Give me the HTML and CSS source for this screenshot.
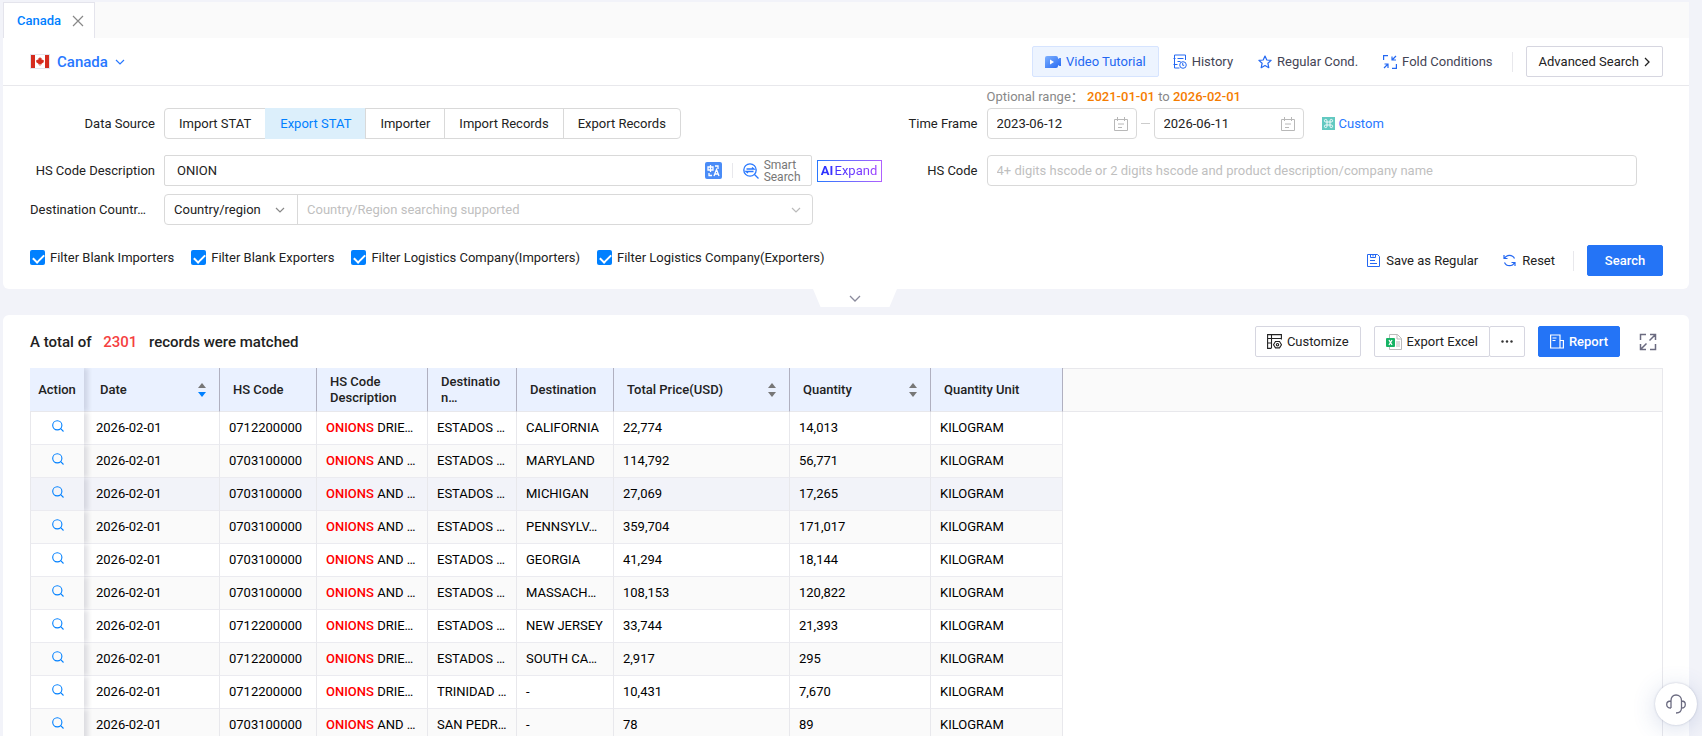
FILE: index.html
```html
<!DOCTYPE html>
<html lang="en">
<head>
    <meta charset="UTF-8">
    <meta name="viewport" content="width=device-width, initial-scale=1">
    <title>Canada</title>
    <link rel="stylesheet" href="styles.css">
</head>
<body>
    <nav class="tabs">
        <div class="tab">
            <a href="#">Canada</a>
            <button class="tab-close" aria-label="Close tab">
                <svg width="12" height="12" viewBox="0 0 12 12"><path d="M1 1l10 10M11 1L1 11" fill="none" stroke="#888" stroke-width="1.2"/></svg>
            </button>
        </div>
    </nav>

    <section class="card search-card">
        <header class="toolbar">
            <button class="country">
                <svg width="20" height="15" viewBox="0 0 20 15">
                    <rect width="20" height="15" fill="#e4e4ec"/>
                    <rect x="1" y="1" width="18" height="13" fill="#fff"/>
                    <path d="M1 1h4v13H1zM15 1h4v13h-4z" fill="#d52b1e"/>
                    <path d="M10 3l1 1.6.9-.4-.3 1.9 1-.7.3.8h1.2l-.5 1.2.4.6-2.5 1.7.2.8-1.4-.2V12h-.6v-1.700l-1.400.2.2-.8L6 8l.4-.6L5.900 6.200h1.200l.3-.8 1 .7-.3-1.900.9.4z" fill="#d52b1e"/>
                </svg>
                <span>Canada</span>
                <svg width="10" height="6" viewBox="0 0 10 6"><path d="M1 1l4 4 4-4" fill="none" stroke="#2878ff" stroke-width="1.2"/></svg>
            </button>
            <div class="tools">
                <button class="tool video">
                    <svg width="16" height="14" viewBox="0 0 16 14">
                        <defs><linearGradient id="cam" x1="0" y1="0" x2="1" y2="1"><stop offset="0" stop-color="#7db0ff"/><stop offset="1" stop-color="#2468f2"/></linearGradient></defs>
                        <path d="M2 1h9a2 2 0 0 1 2 2v1l1.500-1H16v8h-1.500L13 10v1a2 2 0 0 1-2 2H0V3a2 2 0 0 1 2-2z" fill="url(#cam)"/>
                        <path d="M5 4.500v5L9 7z" fill="#fff"/>
                    </svg>
                    Video Tutorial
                </button>
                <button class="tool">
                    <svg width="14" height="15" viewBox="0 0 14 15" fill="none" stroke="#2468f2">
                        <path d="M12.500 6V1h-11v13h5M.5 4.500h2M4.500 4.500h6M4.500 7.500h3M.5 10.500h4"/>
                        <circle cx="10" cy="11" r="3.300"/><path d="M9.700 9v2.300h1.500"/>
                    </svg>
                    History
                </button>
                <button class="tool star">
                    <svg width="14" height="14" viewBox="0 0 14 14"><path d="M7 1l1.800 4 4.300.4L9.900 8.300l.9 4.400L7 10.500l-3.800 2.200.9-4.400L.9 5.400l4.300-.4z" fill="none" stroke="#2468f2" stroke-width="1.200" stroke-linejoin="round"/></svg>
                    Regular Cond.
                </button>
                <button class="tool">
                    <svg width="14" height="14" viewBox="0 0 14 14" fill="none" stroke="#2468f2" stroke-width="1.200">
                        <path d="M.6 5V.6H5"/><path d="M13.400 9v4.400H9"/>
                        <path d="M13 1L9 5M9 1.500V5h4M1 13l4-4M1.500 9H5v4"/>
                    </svg>
                    Fold Conditions
                </button>
                <span class="divider"></span>
                <button class="btn advanced">
                    Advanced Search
                    <svg width="6" height="10" viewBox="0 0 6 10"><path d="M1 1l4 4-4 4" fill="none" stroke="#222" stroke-width="1.300"/></svg>
                </button>
            </div>
        </header>

        <form class="conditions">
            <div class="field left">
                <span class="label">Data Source</span>
                <div class="segments">
                    <button type="button">Import STAT</button>
                    <button type="button" class="active">Export STAT</button>
                    <button type="button">Importer</button>
                    <button type="button">Import Records</button>
                    <button type="button">Export Records</button>
                </div>
            </div>
            <div class="field right time">
                <label class="label" for="from">Time Frame</label>
                <div>
                    <p class="range">Optional range： <b>2021-01-01</b> to <b>2026-02-01</b></p>
                    <div class="dates">
                        <div class="box date">
                            <input id="from" type="text" value="2023-06-12">
                            <svg width="14" height="14" viewBox="0 0 14 14" fill="none" stroke="#b8b8b8"><path d="M.5 2.500h13v11H.5zM3.500 0v4M10.500 0v4M4 7h6M4 10.500h4"/></svg>
                        </div>
                        <span class="dash"></span>
                        <div class="box date">
                            <input type="text" value="2026-06-11" aria-label="End date">
                            <svg width="14" height="14" viewBox="0 0 14 14" fill="none" stroke="#b8b8b8"><path d="M.5 2.500h13v11H.5zM3.500 0v4M10.500 0v4M4 7h6M4 10.500h4"/></svg>
                        </div>
                        <a class="custom" href="#">
                            <svg width="13" height="13" viewBox="0 0 13 13"><rect width="13" height="13" fill="#62c9c1"/><path d="M5 5V3.700A1.300 1.300 0 1 0 3.700 5h5.600A1.300 1.300 0 1 0 8 3.700v5.600A1.300 1.300 0 1 0 9.300 8H3.700A1.300 1.300 0 1 0 5 9.300z" fill="none" stroke="#fff" stroke-width=".9"/></svg>
                            Custom
                        </a>
                    </div>
                </div>
            </div>

            <div class="field left">
                <label class="label" for="desc">HS Code Description</label>
                <div class="box desc">
                    <input id="desc" type="text" value="ONION">
                    <button type="button" class="icon-btn" aria-label="Translate">
                        <svg width="17" height="17" viewBox="0 0 17 17">
                            <rect width="17" height="17" rx="2" fill="#4a8cf7"/>
                            <path d="M3 5h5v3H3zM5.500 3v7M10 4h3v3M4 11v2.500h3M9 14l2.500-6.500L14 14M10 12h3" fill="none" stroke="#fff" stroke-width="1.300"/>
                        </svg>
                    </button>
                    <span class="mini-divider"></span>
                    <button type="button" class="smart">
                        <svg width="16" height="16" viewBox="0 0 16 16" fill="none" stroke="#2878ff" stroke-width="1.300">
                            <circle cx="7" cy="7" r="6.200"/><path d="M11.500 11.500l4 4M3.500 6h7.500L9 4.500M10.500 8.500H3l2 1.500"/>
                        </svg>
                        <span>Smart<br>Search</span>
                    </button>
                </div>
                <button type="button" class="ai"><span><b>AI</b> Expand</span></button>
            </div>
            <div class="field right">
                <label class="label" for="code">HS Code</label>
                <div class="box code">
                    <input id="code" type="text" placeholder="4+ digits hscode or 2 digits hscode and product description/company name">
                </div>
            </div>

            <div class="field left destination">
                <label class="label" for="dest">Destination Countr…</label>
                <div class="box dest">
                    <div class="select-wrap">
                        <select aria-label="Destination type"><option>Country/region</option></select>
                        <svg width="10" height="6" viewBox="0 0 10 6"><path d="M1 1l4 4 4-4" fill="none" stroke="#888" stroke-width="1.200"/></svg>
                    </div>
                    <input id="dest" type="text" placeholder="Country/Region searching supported">
                    <svg width="10" height="6" viewBox="0 0 10 6"><path d="M1 1l4 4 4-4" fill="none" stroke="#bbb" stroke-width="1.200"/></svg>
                </div>
            </div>

            <div class="actions">
                <div class="filters">
                    <label><input type="checkbox" checked>Filter Blank Importers</label>
                    <label><input type="checkbox" checked>Filter Blank Exporters</label>
                    <label><input type="checkbox" checked>Filter Logistics Company(Importers)</label>
                    <label><input type="checkbox" checked>Filter Logistics Company(Exporters)</label>
                </div>
                <div class="submit">
                    <button type="button" class="tool">
                        <svg width="13" height="13" viewBox="0 0 13 13" fill="none" stroke="#2468f2"><path d="M.5.500h10l2 2v10H.5zM3.500.500v3h5v-3M6 1v1.500M3 6.500h5M3 9.500h7"/></svg>
                        Save as Regular
                    </button>
                    <button type="button" class="tool reset">
                        <svg width="13" height="13" viewBox="0 0 13 13" fill="none" stroke="#2468f2" stroke-width="1.200"><path d="M1 1v3.500h3.500M1.500 4.500a5.500 5.500 0 0 1 10 0M12 12V8.500H8.500M11.500 8.500a5.500 5.500 0 0 1-10 0"/></svg>
                        Reset
                    </button>
                    <span class="divider"></span>
                    <button type="button" class="btn primary search">Search</button>
                </div>
            </div>
        </form>
    </section>

    <div class="fold-row">
        <button class="fold" aria-label="Fold">
            <svg width="12" height="7" viewBox="0 0 12 7"><path d="M1 1l5 5 5-5" fill="none" stroke="#8a8a9c" stroke-width="1.300"/></svg>
        </button>
    </div>

    <main class="card results">
        <header class="results-head">
            <h1>A total of <span>2301</span> records were matched</h1>
            <div class="results-tools">
                <button class="btn customize">
                    <svg width="15" height="15" viewBox="0 0 15 15" fill="none" stroke="#222" stroke-width="1.100">
                        <path d="M14.400 5.500V.6H.6v13.800h3.900M.6 4.500h13.800M4.500 1v13M.6 9h4"/>
                        <path d="M8.500 7.500h4l2 3.200-2 3.200h-4l-2-3.200z"/><circle cx="10.500" cy="10.700" r="1.200"/>
                    </svg>
                    Customize
                </button>
                <div class="export">
                    <button class="btn">
                        <svg width="16" height="16" viewBox="0 0 16 16">
                            <path d="M3.500.500h8l4 4v11h-12zM11 .500v4.500h4.500" fill="#fff" stroke="#bbb"/>
                            <path d="M10 8h4M10 10h4M10 12h4" stroke="#bbb"/>
                            <rect y="4" width="9" height="9" rx="1" fill="#16b364"/><path d="M3 6l3 5M6 6l-3 5" stroke="#fff" stroke-width="1.300"/>
                        </svg>
                        Export Excel
                    </button>
                    <button class="btn more" aria-label="More">
                        <svg width="12" height="3" viewBox="0 0 12 3" fill="#333"><circle cx="1.500" cy="1.500" r="1.200"/><circle cx="6" cy="1.500" r="1.200"/><circle cx="10.500" cy="1.500" r="1.200"/></svg>
                    </button>
                </div>
                <button class="btn primary report">
                    <svg width="14" height="15" viewBox="0 0 14 15" fill="none" stroke="#fff" stroke-width="1.200"><path d="M10 14H.6V1H10zM10 14h3.400V6.500H10M2.500 4h4M2.500 6.500h3"/></svg>
                    Report
                </button>
                <button class="icon-btn" aria-label="Full screen">
                    <svg width="18" height="18" viewBox="0 0 18 18" fill="none" stroke="#6b6b80" stroke-width="1.500"><path d="M1.500 7V1.500H7M16.500 11v5.500H11M11 1.500h5.500V7M16 2l-5.500 5.500M7 16.500H1.500V11M2 16l5.500-5.500"/></svg>
                </button>
            </div>
        </header>

        <div class="table-wrap">
            <table>
                <colgroup>
                    <col class="c-action"><col class="c-date"><col class="c-code"><col class="c-desc"><col class="c-country"><col class="c-dest"><col class="c-price"><col class="c-qty"><col class="c-unit"><col>
                </colgroup>
                <thead>
                    <tr>
                        <th class="action">Action</th>
                        <th><div class="sortable">Date <span class="sort desc-on"></span></div></th>
                        <th>HS Code</th>
                        <th>HS Code<br>Description</th>
                        <th>Destinatio<br>n…</th>
                        <th>Destination</th>
                        <th><div class="sortable">Total Price(USD) <span class="sort"></span></div></th>
                        <th><div class="sortable">Quantity <span class="sort"></span></div></th>
                        <th>Quantity Unit</th>
                        <th class="filler"></th>
                    </tr>
                </thead>
                <tbody id="rows"></tbody>
            </table>
        </div>
    </main>

    <button class="support" aria-label="Support">
        <svg width="20" height="20" viewBox="0 0 20 20" fill="none" stroke="#6b6b80" stroke-width="1.300">
            <path d="M5 14V6.500C5 3 7 1 10 1s5.500 2 5.500 5.500V14c0 3-2 5-5.500 5M5 7C2.500 7 .7 8.500.7 10.500S2.500 14 5 14M15.500 7c2.300 0 3.800 1.500 3.800 3.500S17.800 14 15.500 14"/>
        </svg>
    </button>

    <script src="script.js"></script>
</body>
</html>
```
FILE: styles.css
```css
* {
    box-sizing: border-box;
}

body {
    display: flex;
    flex-direction: column;
    height: 100vh;
    margin: 0;
    padding: 2px 13px 0 3px;
    overflow: hidden;
    background: #f2f3f9;
    color: #222;
    font-family: Roboto, "Noto Sans CJK SC", sans-serif;
    font-size: 13px;
    line-height: 16px;
}

button,
input,
select {
    padding: 0;
    border: 0;
    background: none;
    color: inherit;
    font: inherit;
}

svg {
    flex: none;
}

a {
    color: #2878ff;
    text-decoration: none;
}

/* tabs */
.tabs {
    flex: none;
    display: flex;
    height: 36px;
    background: #fafafa;
}

.tab {
    display: flex;
    align-items: center;
    gap: 11px;
    padding: 0 10px 0 13px;
    border: 1px solid #e4e4ec;
    border-bottom: 0;
    background: #fff;
}

.tab a {
    color: #0080ff;
    font-weight: 500;
}

.tab-close {
    display: flex;
}

.card {
    flex: none;
    background: #fff;
}

/* search card */
.search-card {
    border-radius: 0 0 6px 6px;
}

.toolbar {
    display: flex;
    align-items: center;
    justify-content: space-between;
    height: 48px;
    padding: 0 26px 0 27px;
    border-bottom: 1px solid #e8e8ec;
}

.country {
    display: flex;
    align-items: center;
    gap: 7px;
    color: #2878ff;
    font-size: 15px;
    font-weight: 500;
}

.tools,
.submit {
    display: flex;
    align-items: center;
}

.tool {
    display: flex;
    align-items: center;
    gap: 5px;
    margin-right: 25px;
    color: #444455;
}

.video {
    height: 31px;
    margin-right: 14px;
    padding: 0 12px;
    border: 1px solid #d6e4ff;
    border-radius: 2px;
    background: #edf4ff;
    color: #2468f2;
}

.divider {
    width: 1px;
    height: 20px;
    margin-right: 13px;
    background: #e8e8ec;
}

.tools .divider {
    margin-left: -6px;
}

.btn {
    display: flex;
    align-items: center;
    justify-content: center;
    gap: 5px;
    height: 31px;
    padding: 0 11px;
    border: 1px solid #d6d6e0;
    border-radius: 2px;
    background: #fff;
}

.advanced {
    padding: 0 12px;
}

.primary {
    border-color: #2474f6;
    background: #2474f6;
    color: #fff;
    font-weight: 500;
}

/* form */
.conditions {
    display: grid;
    grid-template-columns: calc(50% + 35px) minmax(0, 1fr);
    padding: 3px 26px 13px 27px;
}

.field {
    display: flex;
    align-items: center;
    gap: 9px;
    height: 31px;
    margin-bottom: 8px;
}

.field.left {
    padding-right: 69px;
}

.field.right {
    padding-right: 26px;
}

.field:nth-child(-n+2) {
    height: 50px;
    margin-bottom: 16px;
    align-items: flex-end;
}

.label {
    flex: none;
    width: 125px;
    text-align: right;
    white-space: nowrap;
}

.right .label {
    width: 96px;
}

.destination .label {
    text-align: left;
}

.field:nth-child(-n+2) .label {
    line-height: 31px;
}

.segments {
    display: flex;
}

.segments button {
    height: 31px;
    margin-right: -1px;
    padding: 0 14px;
    border: 1px solid #d9d9d9;
}

.segments button:first-child {
    border-radius: 4px 0 0 4px;
}

.segments button:last-child {
    border-radius: 0 4px 4px 0;
}

.segments .active {
    border-color: #dceffb;
    background: #dceffb;
    color: #0080ff;
}

.box {
    flex: 1;
    display: flex;
    align-items: center;
    min-width: 0;
    height: 31px;
    border: 1px solid #d9d9d9;
    border-radius: 4px;
}

.box input {
    flex: 1;
    min-width: 0;
    height: 29px;
    padding: 0 0 0 9px;
    outline: 0;
}

.box input::placeholder {
    color: #bfbfbf;
}

.range {
    margin: 0 0 3px;
    color: #888;
}

.range b {
    color: #f57c00;
    font-weight: 500;
}

.dates {
    display: flex;
    align-items: center;
}

.date {
    flex: none;
    width: 150px;
    padding-right: 8px;
}

.dash {
    width: 9px;
    height: 1px;
    margin: 0 4px;
    background: #ccc;
}

.custom {
    display: flex;
    align-items: center;
    gap: 4px;
    margin-left: 18px;
}

.desc {
    padding-right: 10px;
    border-radius: 2px;
}

.desc input {
    padding-left: 12px;
}

.icon-btn {
    display: flex;
}

.mini-divider {
    width: 1px;
    height: 15px;
    margin: 0 10px;
    background: #e8e8ec;
}

.smart {
    display: flex;
    align-items: center;
    gap: 5px;
    color: #777;
    font-size: 12px;
    line-height: 12px;
    text-align: left;
}

.ai {
    flex: none;
    width: 65px;
    height: 22px;
    margin: 0 -69px 0 -4px;
    border: 1px solid;
    border-image: linear-gradient(90deg, #2878ff, #b060ff) 1;
}

.ai span {
    background: linear-gradient(90deg, #2430ff, #9a3cff);
    background-clip: text;
    -webkit-background-clip: text;
    color: transparent;
}

.ai b {
    margin-right: -2px;
}

.select-wrap {
    display: flex;
    align-items: center;
    height: 29px;
    padding: 0 12px 0 9px;
    border-right: 1px solid #d9d9d9;
    gap: 14px;
}

.select-wrap select {
    appearance: none;
    outline: 0;
}

.dest {
    padding-right: 11px;
}

.actions {
    grid-column: 1 / -1;
    display: flex;
    justify-content: space-between;
    margin-top: 12px;
}

.filters {
    display: flex;
    gap: 17px;
    height: 25px;
    align-items: center;
}

.filters label {
    display: flex;
    align-items: center;
    gap: 5px;
}

.filters input {
    appearance: none;
    width: 15px;
    height: 15px;
    margin: 0;
    border-radius: 2px;
    background: #0080ff;
    position: relative;
}

.filters input:checked::after {
    content: "";
    position: absolute;
    top: 2px;
    left: 5px;
    width: 5px;
    height: 9px;
    border: solid #fff;
    border-width: 0 2px 2px 0;
    transform: rotate(45deg);
}

.submit .tool {
    gap: 6px;
    color: #222;
}

.submit .reset {
    margin-right: 18px;
}

.search {
    width: 76px;
}

/* fold handle */
.fold-row {
    flex: none;
    display: flex;
    justify-content: center;
    height: 26px;
    padding-left: 18px;
}

.fold {
    display: flex;
    align-items: center;
    justify-content: center;
    width: 84px;
    height: 18px;
    background: #fff;
    clip-path: polygon(0 0, 100% 0, 91% 100%, 9% 100%);
}

/* results */
.results {
    flex: 1;
    min-height: 0;
    padding: 0 26px 0 27px;
    border-radius: 6px 6px 0 0;
    overflow: hidden;
}

.results-head {
    display: flex;
    align-items: center;
    justify-content: space-between;
    height: 53px;
}

.results h1 {
    margin: 0;
    font-size: 15px;
    font-weight: 500;
}

.results h1 span {
    margin: 0 8px;
    color: #f53f3f;
}

.results-tools {
    display: flex;
    align-items: center;
    gap: 13px;
}

.results-tools .icon-btn {
    margin: 0 6px;
}

.export {
    display: flex;
}

.export .more {
    width: 36px;
    margin-left: -1px;
}

.table-wrap {
    border-right: 1px solid #e8e8ec;
    height: 100%;
}

table {
    width: 100%;
    table-layout: fixed;
    border-collapse: separate;
    border-spacing: 0;
    color: #000;
}

.c-action { width: 54px; }
.c-date { width: 136px; }
.c-code { width: 97px; }
.c-desc { width: 111px; }
.c-country { width: 89px; }
.c-dest { width: 97px; }
.c-price { width: 176px; }
.c-qty { width: 141px; }
.c-unit { width: 132px; }

th {
    height: 44px;
    padding: 0 13px;
    border-right: 1px solid #b0b0c0;
    border-bottom: 1px solid #e8e8ec;
    background: #eaf1ff;
    color: #222;
    font-weight: 500;
    text-align: left;
}

td {
    height: 33px;
    padding: 0 0 0 9px;
    border-right: 1px solid #e8e8ec;
    border-bottom: 1px solid #ebebf0;
    white-space: nowrap;
    overflow: hidden;
}

tr > .action {
    position: relative;
    padding: 0;
    border-right: 0;
    text-align: center;
    overflow: visible;
    box-shadow: 4px 0 5px rgba(0, 0, 40, 0.12);
    clip-path: inset(0 -8px 0 0);
}

td.action {
    border-left: 1px solid #e8e8ec;
    background: inherit;
}

td.action button {
    vertical-align: middle;
}

.action + th {
    padding-left: 16px;
}

.action + td {
    padding-left: 12px;
}

tbody tr {
    background: #fff;
}

tbody tr:nth-child(even) td:not(.filler) {
    background: #fafafa;
}

tbody tr:nth-child(3) td:not(.filler) {
    background: #f2f3f9;
}

th.filler {
    border: 1px solid #e8e8ec;
    border-width: 1px 0;
    background: #fafafa;
}

td.filler {
    border: 0;
    background: #fff;
}

td b {
    color: #ff0000;
    font-weight: 500;
}

.sortable {
    display: flex;
    align-items: center;
    justify-content: space-between;
}

.sort::before,
.sort::after {
    content: "";
    display: block;
    border: 4px solid transparent;
}

.sort::before {
    margin-bottom: 4px;
    border-top: 0;
    border-bottom: 5px solid #777;
}

.sort::after {
    border-bottom: 0;
    border-top: 5px solid #777;
}

.desc-on::after {
    border-top-color: #0080ff;
}

.support {
    position: fixed;
    right: 5px;
    bottom: 11px;
    display: flex;
    align-items: center;
    justify-content: center;
    width: 42px;
    height: 42px;
    border-radius: 50%;
    background: #fff;
    box-shadow: 0 0 2px rgba(60, 70, 110, 0.3), 0 4px 24px rgba(60, 90, 160, 0.2);
}
```
FILE: script.js
```js
const records = [
    ['0712200000', 'DRIE…', 'ESTADOS …', 'CALIFORNIA', '22,774', '14,013'],
    ['0703100000', 'AND …', 'ESTADOS …', 'MARYLAND', '114,792', '56,771'],
    ['0703100000', 'AND …', 'ESTADOS …', 'MICHIGAN', '27,069', '17,265'],
    ['0703100000', 'AND …', 'ESTADOS …', 'PENNSYLV…', '359,704', '171,017'],
    ['0703100000', 'AND …', 'ESTADOS …', 'GEORGIA', '41,294', '18,144'],
    ['0703100000', 'AND …', 'ESTADOS …', 'MASSACH…', '108,153', '120,822'],
    ['0712200000', 'DRIE…', 'ESTADOS …', 'NEW JERSEY', '33,744', '21,393'],
    ['0712200000', 'DRIE…', 'ESTADOS …', 'SOUTH CA…', '2,917', '295'],
    ['0712200000', 'DRIE…', 'TRINIDAD …', '-', '10,431', '7,670'],
    ['0703100000', 'AND …', 'SAN PEDR…', '-', '78', '89']
];

document.getElementById('rows').innerHTML = records.map(r => `
    <tr>
        <td class="action"><button aria-label="View"><svg width="12" height="12" viewBox="0 0 12 12" fill="none" stroke="#0080ff" stroke-width="1.1"><circle cx="5.300" cy="5.300" r="4.600"/><path d="M8.700 8.700l2.800 2.800"/></svg></button></td>
        <td>2026-02-01</td>
        <td>${r[0]}</td>
        <td><b>ONIONS</b> ${r[1]}</td>
        <td>${r[2]}</td>
        <td>${r[3]}</td>
        <td>${r[4]}</td>
        <td>${r[5]}</td>
        <td>KILOGRAM</td>
        <td class="filler"></td>
    </tr>`).join('');
```
